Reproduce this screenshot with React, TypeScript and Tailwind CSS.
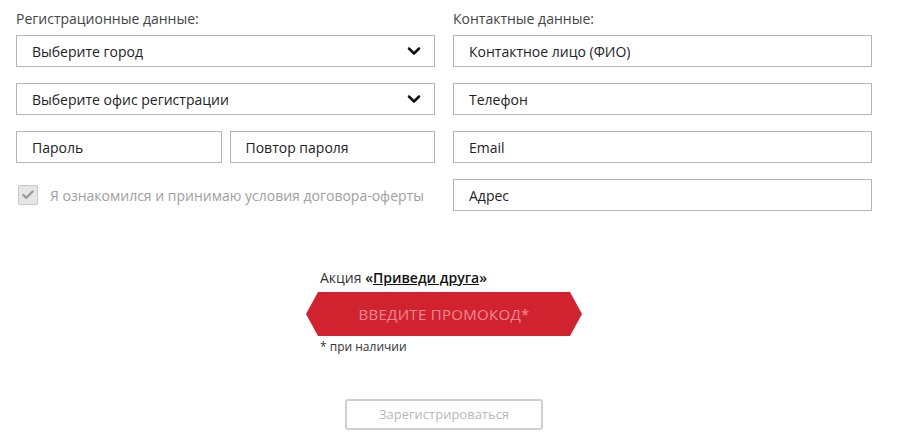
import { ChevronDown, Check } from 'lucide-react'

const inputCls =
  'h-8 w-full border border-[#b4b4b4] bg-white px-[15px] text-[14px] text-[#222] placeholder:text-[#222] outline-none'

function Field({ placeholder }: { placeholder: string }) {
  return <input type="text" className={inputCls} placeholder={placeholder} />
}

function SelectField({ label }: { label: string }) {
  return (
    <div className="flex h-8 w-full items-center justify-between border border-[#b4b4b4] bg-white pl-[15px] pr-[10px] text-[14px] text-[#222]">
      <span>{label}</span>
      <ChevronDown size={20} strokeWidth={3} className="text-[#111]" />
    </div>
  )
}

export default function App() {
  return (
    <div
      className="min-h-[447px] w-[902px] bg-white"
      style={{ fontFamily: '"Open Sans", "Liberation Sans", sans-serif' }}
    >
      <div className="w-[888px] px-4 pt-[9px]">
        <div className="grid grid-cols-2 gap-x-[18px]">
          {/* Left column */}
          <div className="flex flex-col">
            <h3 className="mb-[6px] text-[14px] leading-5 font-normal text-[#444]">Регистрационные данные:</h3>
            <div className="flex flex-col gap-4">
              <SelectField label="Выберите город" />
              <SelectField label="Выберите офис регистрации" />
              <div className="flex gap-[8px]">
                <Field placeholder="Пароль" />
                <Field placeholder="Повтор пароля" />
              </div>
              <label className="flex h-8 items-center gap-[12px] pl-[2px]">
                <span className="flex h-[20px] w-[20px] items-center justify-center rounded-[2px] border border-[#c8c8c8] bg-[#e6e6e6]">
                  <Check size={14} strokeWidth={4} className="text-[#9a9a9a]" />
                </span>
                <span className="text-[14px] text-[#a0a0a0]">Я ознакомился и принимаю условия договора-оферты</span>
              </label>
            </div>
          </div>

          {/* Right column */}
          <div className="flex flex-col">
            <h3 className="mb-[6px] text-[14px] leading-5 font-normal text-[#444]">Контактные данные:</h3>
            <div className="flex flex-col gap-4">
              <Field placeholder="Контактное лицо (ФИО)" />
              <Field placeholder="Телефон" />
              <Field placeholder="Email" />
              <Field placeholder="Адрес" />
            </div>
          </div>
        </div>

        {/* Promo */}
        <div className="mt-[57px] flex flex-col items-center">
          <div className="w-[276px]">
            <p className="pl-[14px] text-[14px] leading-5 text-[#333]">
              Акция <a href="#" className="font-semibold text-[#111]">«<span className="underline">Приведи друга</span>»</a>
            </p>
            <button
              type="button"
              className="mt-[4px] flex h-[44px] w-[276px] items-center justify-center bg-[#d0222f] text-[15px] tracking-[0.3px] text-[#f28a92] [clip-path:polygon(12px_0,264px_0,100%_50%,264px_100%,12px_100%,0_50%)]"
            >
              ВВЕДИТЕ ПРОМОКОД*
            </button>
            <p className="mt-[3px] pl-[14px] text-[12px] leading-4 text-[#333]">* при наличии</p>
          </div>
          <button
            type="button"
            className="mt-[44px] h-[31px] w-[198px] rounded-[3px] border-2 border-[#d0d0d0] bg-white text-[13px] text-[#b8b8b8]"
          >
            Зарегистрироваться
          </button>
        </div>
      </div>
    </div>
  )
}
